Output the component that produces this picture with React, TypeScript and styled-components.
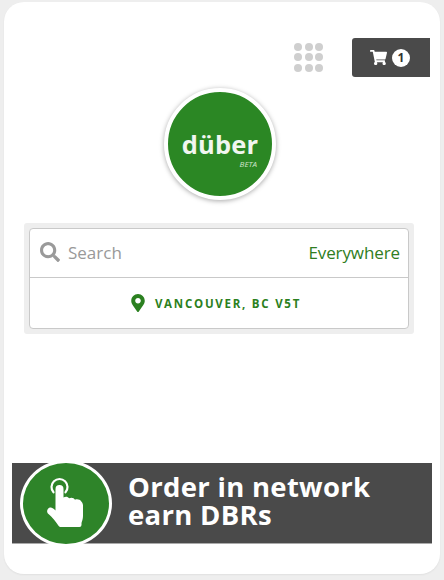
import React from "react";
import styled, { createGlobalStyle } from "styled-components";
import { FaShoppingCart, FaSearch, FaMapMarkerAlt } from "react-icons/fa";

const Global = createGlobalStyle`
  html, body { margin: 0; padding: 0; background: #eeeeee; }
  body { font-family: "Open Sans", "Liberation Sans", sans-serif; }
`;

const Page = styled.div`
  width: 444px;
  height: 580px;
  padding: 2px 4px 6px;
  box-sizing: border-box;
`;

const Card = styled.div`
  height: 572px;
  background: #fff;
  border-radius: 20px;
  padding: 36px 8px 0;
  box-sizing: border-box;
  display: flex;
  flex-direction: column;
  box-shadow: 0 1px 2px rgba(0, 0, 0, 0.06);
`;

const Toolbar = styled.div`
  display: flex;
  justify-content: flex-end;
  align-items: center;
  gap: 29px;
  padding-right: 2px;
  height: 39px;
`;

const DotGrid = styled.div`
  display: grid;
  grid-template-columns: repeat(3, 8px);
  grid-auto-rows: 8px;
  gap: 2.5px;
  margin-top: -1px;
`;

const Dot = styled.span`
  background: #cfcfcf;
  border-radius: 50%;
`;

const CartButton = styled.div`
  width: 78px;
  height: 39px;
  background: #4a4a4a;
  border-radius: 3px 0 0 3px;
  display: flex;
  align-items: center;
  justify-content: center;
  gap: 5px;
  color: #fff;
  padding-right: 2px;
  box-sizing: border-box;
  svg { font-size: 17px; }
`;

const CartBadge = styled.span`
  width: 18px;
  height: 18px;
  border-radius: 50%;
  background: #fff;
  color: #333;
  font-size: 12px;
  font-weight: 700;
  display: flex;
  align-items: center;
  justify-content: center;
`;

const LogoWrap = styled.div`
  display: flex;
  justify-content: center;
  margin: 11px 4px 0 0;
`;

const Logo = styled.div`
  position: relative;
  width: 112px;
  height: 112px;
  box-sizing: border-box;
  border-radius: 50%;
  background: #2b8724;
  border: 4px solid #fff;
  box-shadow: 0 1px 5px rgba(0, 0, 0, 0.35);
  display: flex;
  align-items: center;
  justify-content: center;
`;

const LogoText = styled.span`
  font-family: "Open Sans", sans-serif;
  font-weight: 700;
  font-size: 25.5px;
  letter-spacing: 0.2px;
  color: #f1f6f0;
  line-height: 1;
  margin-top: 2px;
`;

const Beta = styled.span`
  position: absolute;
  right: 15px;
  top: 68px;
  font-size: 8px;
  font-style: italic;
  color: #cfe4cc;
  line-height: 1;
`;

const SearchPanel = styled.div`
  margin: 23px 18px 0 12px;
  padding: 5px;
  background: #eeeeee;
  border-radius: 3px;
`;

const SearchBox = styled.div`
  background: #fff;
  border: 1px solid #c9c9c9;
  border-radius: 4px;
`;

const SearchRow = styled.div`
  height: 49px;
  display: flex;
  align-items: center;
  padding: 0 8px 2px 10px;
  box-sizing: border-box;
  border-bottom: 1px solid #c9c9c9;
`;

const SearchIcon = styled(FaSearch)`
  color: #9a9a9a;
  font-size: 20px;
  margin-right: 8px;
`;

const Placeholder = styled.span`
  flex: 1;
  font-size: 17px;
  color: #999;
`;

const Scope = styled.span`
  font-size: 17px;
  letter-spacing: -0.1px;
  color: #2f7d22;
`;

const LocationRow = styled.div`
  height: 50px;
  display: flex;
  align-items: center;
  justify-content: center;
  gap: 8px;
  padding-right: 8px;
  color: #2b8020;
  font-size: 11.5px;
  font-weight: 700;
  letter-spacing: 1.75px;
  svg { font-size: 18px; }
`;

const Banner = styled.div`
  position: relative;
  margin-top: auto;
  margin-bottom: 30px;
  height: 81px;
  background: #4a4a4a;
  border-bottom: 1px solid #aaa;
  box-sizing: border-box;
  display: flex;
  align-items: center;
  padding-left: 116px;
`;

const BannerBadge = styled.div`
  position: absolute;
  left: 8px;
  top: -3px;
  width: 92px;
  height: 87px;
  box-sizing: border-box;
  border-radius: 50%;
  background: #2e8429;
  border: 3px solid #fff;
  display: flex;
  align-items: center;
  justify-content: center;
`;

const BannerText = styled.div`
  color: #fff;
  font-size: 27.5px;
  font-weight: 700;
  line-height: 28px;
  letter-spacing: 0.3px;
  margin-top: -4px;
`;

const HandIcon = () => (
  <svg width="44" height="58" viewBox="44 475 44 58" fill="none">
    <path d="M53.500 492.300A8 8 0 1 1 65.500 492.300" stroke="#fff" strokeWidth="2.200" strokeLinecap="round" />
    <path
      fill="#fff"
      d="M55.500 489a4 4 0 0 1 8 0v8.500c1.700-1.300 4.500-1.100 5.700.8 1.800-1.200 4.800-.8 5.800 1.500 2-1 5-.4 6.500 2 .9 1 1.500 2.200 1.500 3.700V516c0 3-1 5-1.500 7v2a2 2 0 0 1-2 2H61c-1 0-2-.5-2.500-1.300C56 522 52 517 48.500 514c-1.500-1.300-1.800-3.200-.8-4.800 1-1.700 3.300-2.200 5-1 1.100.7 2 1.400 2.800 2.300V489Z"
    />
  </svg>
);

export default function App() {
  return (
    <Page>
      <Global />
      <Card>
        <Toolbar>
          <DotGrid>
            {Array.from({ length: 9 }, (_, i) => (
              <Dot key={i} />
            ))}
          </DotGrid>
          <CartButton>
            <FaShoppingCart />
            <CartBadge>1</CartBadge>
          </CartButton>
        </Toolbar>
        <LogoWrap>
          <Logo>
            <LogoText>düber</LogoText>
            <Beta>BETA</Beta>
          </Logo>
        </LogoWrap>
        <SearchPanel>
          <SearchBox>
            <SearchRow>
              <SearchIcon />
              <Placeholder>Search</Placeholder>
              <Scope>Everywhere</Scope>
            </SearchRow>
            <LocationRow>
              <FaMapMarkerAlt />
              <span>VANCOUVER, BC V5T</span>
            </LocationRow>
          </SearchBox>
        </SearchPanel>
        <Banner>
          <BannerBadge>
            <HandIcon />
          </BannerBadge>
          <BannerText>
            Order in network
            <br />
            earn DBRs
          </BannerText>
        </Banner>
      </Card>
    </Page>
  );
}
